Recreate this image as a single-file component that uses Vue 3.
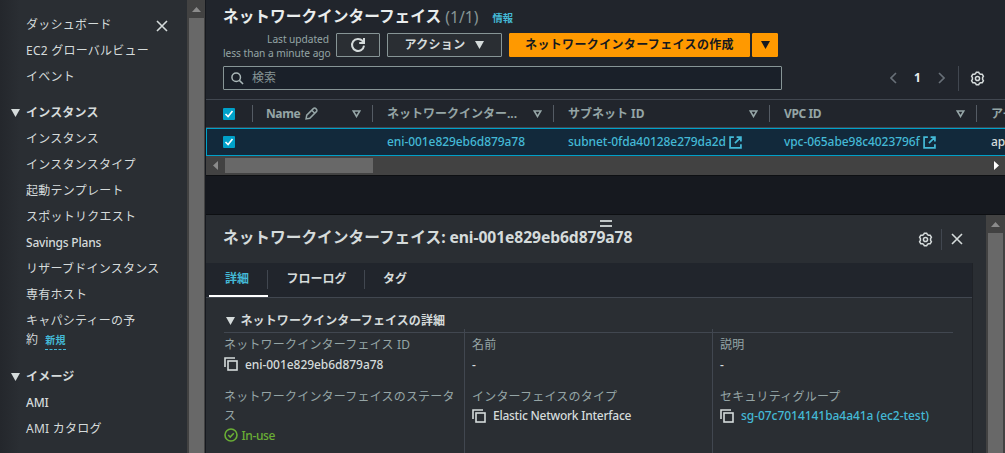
<template>
    <div class="console">
        <nav class="sidebar">
            <div class="nav-body">
                <svg class="nav-close" viewBox="0 0 12 12">
                    <path d="M1 1l10 10M11 1L1 11" />
                </svg>
                <section v-for="(group, i) in groups" :key="i" class="group">
                    <div v-if="group.title" class="group-title">
                        <svg class="caret" viewBox="0 0 9 8"><path d="M0 0h9L4.5 8z" /></svg>
                        <span>{{ group.title }}</span>
                    </div>
                    <div v-for="item in group.items" :key="item.text" class="item">
                        <span :class="{ latin: item.latin }">{{ item.text }}</span>
                        <template v-if="item.rest"
                            ><br />{{ item.rest }}<span class="new">新規</span></template
                        >
                    </div>
                </section>
            </div>
            <div class="vbar">
                <svg viewBox="0 0 9 5"><path d="M4.5 0L9 5H0z" /></svg>
                <div class="thumb"></div>
            </div>
        </nav>

        <main class="main">
            <header class="list-head">
                <div class="title-row">
                    <h1>ネットワークインターフェイス</h1>
                    <span class="count">(1/1)</span>
                    <a class="info">情報</a>
                </div>
                <div class="actions">
                    <p class="updated">
                        <span>Last updated</span><br /><span>less than a minute ago</span>
                    </p>
                    <button class="btn refresh">
                        <svg viewBox="0 0 16 16">
                            <path d="M14 8.6A6 6 0 1 1 12.6 4L14 5.6M14 1v5H9.2" />
                        </svg>
                    </button>
                    <button class="btn action">
                        <span>アクション</span>
                        <svg class="caret" viewBox="0 0 9 8"><path d="M0 0h9L4.5 8z" /></svg>
                    </button>
                    <button class="btn create">ネットワークインターフェイスの作成</button>
                    <button class="btn more">
                        <svg class="caret" viewBox="0 0 9 8"><path d="M0 0h9L4.5 8z" /></svg>
                    </button>
                </div>
                <div class="filter">
                    <div class="search">
                        <svg viewBox="0 0 14 14">
                            <circle cx="5.6" cy="5.6" r="4.6" />
                            <path d="M9 9l4 4" />
                        </svg>
                        <span>検索</span>
                    </div>
                    <div class="pager">
                        <svg class="chev" viewBox="0 0 7 12"><path d="M6 1L1 6l5 5" /></svg>
                        <b>1</b>
                        <svg class="chev" viewBox="0 0 7 12"><path d="M1 1l5 5-5 5" /></svg>
                        <i class="sep"></i>
                        <svg class="gear" viewBox="0 0 16 16">
                            <path :d="gearPath" />
                            <circle cx="8" cy="8" r="2.2" />
                        </svg>
                    </div>
                </div>
            </header>

            <div class="table">
                <div class="row head">
                    <div class="cell check">
                        <svg class="box" viewBox="0 0 12 12">
                            <rect width="12" height="12" rx="1" />
                            <path d="M2.5 6l2.6 2.6L9.5 3" />
                        </svg>
                    </div>
                    <div v-for="col in columns" :key="col.label" class="cell">
                        <span :class="{ latin: col.latin }">{{ col.label }}</span>
                        <svg v-if="col.edit" class="pencil" viewBox="0 0 12 12">
                            <path
                                d="M1 11l.6-3.4L7.7 1.5a1.6 1.6 0 0 1 2.3 0l.5.5a1.6 1.6 0 0 1 0 2.3L4.4 10.4zM6.2 3l2.8 2.8"
                            />
                        </svg>
                        <svg class="sort" viewBox="0 0 9 8"><path d="M1.2 1h6.6L4.5 6.5z" /></svg>
                    </div>
                    <div class="cell last"><span>アイ</span></div>
                </div>
                <div class="row selected">
                    <div class="cell check">
                        <svg class="box" viewBox="0 0 12 12">
                            <rect width="12" height="12" rx="1" />
                            <path d="M2.5 6l2.6 2.6L9.5 3" />
                        </svg>
                    </div>
                    <div class="cell"></div>
                    <div class="cell"><a>eni-001e829eb6d879a78</a></div>
                    <div v-for="link in links" :key="link" class="cell">
                        <a>{{ link }}</a>
                        <svg class="ext" viewBox="0 0 12 12">
                            <path d="M4.5 1H1v10h10V7.5M7 1h4v4M11 1L5.5 6.5" />
                        </svg>
                    </div>
                    <div class="cell last"><span>ap</span></div>
                </div>
            </div>
            <div class="hbar">
                <svg class="left" viewBox="0 0 5 9"><path d="M5 0v9L0 4.5z" /></svg>
                <div class="thumb"></div>
                <svg class="right" viewBox="0 0 5 9"><path d="M0 0v9l5-4.5z" /></svg>
            </div>
            <div class="gap"></div>

            <section class="split">
                <div class="panel">
                    <div class="grip"></div>
                    <header class="panel-head">
                        <h2>ネットワークインターフェイス<span>: eni-001e829eb6d879a78</span></h2>
                        <svg class="gear" viewBox="0 0 16 16">
                            <path :d="gearPath" />
                            <circle cx="8" cy="8" r="2.2" />
                        </svg>
                        <i class="sep"></i>
                        <svg class="close" viewBox="0 0 12 12">
                            <path d="M1 1l10 10M11 1L1 11" />
                        </svg>
                    </header>
                    <div class="content">
                        <div class="tabs">
                            <div
                                v-for="tab in tabs"
                                :key="tab"
                                class="tab"
                                :class="{ active: tab === activeTab }"
                                @click="activeTab = tab"
                            >
                                <span>{{ tab }}</span>
                            </div>
                        </div>
                        <div class="details">
                            <h3>
                                <svg class="caret" viewBox="0 0 9 8"><path d="M0 0h9L4.5 8z" /></svg>
                                <span>ネットワークインターフェイスの詳細</span>
                            </h3>
                            <div class="grid">
                                <div v-for="(col, i) in details" :key="i" class="col">
                                    <dl v-for="field in col" :key="field.label">
                                        <dt>{{ field.label }}</dt>
                                        <dd :class="field.cls">
                                            <svg v-if="field.copy" class="copy" viewBox="0 0 14 14">
                                                <path d="M1 10V1h10" />
                                                <rect x="4" y="4" width="9" height="9" />
                                            </svg>
                                            <svg v-if="field.ok" class="ok" viewBox="0 0 14 14">
                                                <circle cx="7" cy="7" r="6" />
                                                <path d="M4.2 7l2 2 3.6-3.8" />
                                            </svg>
                                            <span>{{ field.value }}</span>
                                        </dd>
                                    </dl>
                                </div>
                            </div>
                        </div>
                    </div>
                </div>
                <div class="vbar">
                    <svg viewBox="0 0 9 5"><path d="M4.5 0L9 5H0z" /></svg>
                    <div class="thumb"></div>
                </div>
            </section>
        </main>
    </div>
</template>

<script setup>
import { ref } from "vue";

const gearPath =
    "M5.9 2.9L6.8 1.3h2.4l.9 1.6 1.1.6 1.8 0 1.3 2-.9 1.6v1.8l.9 1.6-1.3 2h-1.8l-1.1.6-.9 1.6H6.8l-.9-1.6-1.1-.6H3l-1.3-2 .9-1.6V7.1l-.9-1.6 1.3-2h1.8z";

const groups = [
    {
        items: [
            { text: "ダッシュボード" },
            { text: "EC2 グローバルビュー" },
            { text: "イベント" },
        ],
    },
    {
        title: "インスタンス",
        items: [
            { text: "インスタンス" },
            { text: "インスタンスタイプ" },
            { text: "起動テンプレート" },
            { text: "スポットリクエスト" },
            { text: "Savings Plans", latin: true },
            { text: "リザーブドインスタンス" },
            { text: "専有ホスト" },
            { text: "キャパシティーの予", rest: "約" },
        ],
    },
    {
        title: "イメージ",
        items: [{ text: "AMI", latin: true }, { text: "AMI カタログ" }],
    },
];

const columns = [
    { label: "Name", edit: true, latin: true },
    { label: "ネットワークインター..." },
    { label: "サブネット ID" },
    { label: "VPC ID", latin: true },
];

const links = ["subnet-0fda40128e279da2d", "vpc-065abe98c4023796f"];

const tabs = ["詳細", "フローログ", "タグ"];
const activeTab = ref("詳細");

const details = [
    [
        { label: "ネットワークインターフェイス ID", value: "eni-001e829eb6d879a78", copy: true },
        { label: "ネットワークインターフェイスのステータス", value: "In-use", ok: true, cls: "status" },
    ],
    [
        { label: "名前", value: "-" },
        { label: "インターフェイスのタイプ", value: "Elastic Network Interface", copy: true, cls: "words" },
    ],
    [
        { label: "説明", value: "-" },
        { label: "セキュリティグループ", value: "sg-07c7014141ba4a41a (ec2-test)", copy: true, cls: "link" },
    ],
];
</script>

<style>
body {
    background: #16191f;
    overflow: hidden;
}
</style>

<style scoped>
* {
    box-sizing: border-box;
}

.console {
    display: flex;
    width: 1005px;
    height: 453px;
    overflow: hidden;
    background: #16191f;
    color: #d5dbdb;
    font: 12px/19.5px "Noto Sans", "Noto Sans CJK JP", sans-serif;
    white-space: nowrap;
}

svg {
    display: block;
    flex: none;
    fill: none;
    stroke: currentColor;
    stroke-width: 1.6;
}

h1,
h2,
h3,
p,
dl,
dd {
    margin: 0;
}

.caret {
    width: 9px;
    height: 8px;
    fill: currentColor;
    stroke: none;
}

.sep {
    width: 1px;
    background: #414750;
}

/* sidebar */
.sidebar {
    display: flex;
    flex: none;
    width: 206px;
    border-right: 1px solid #16191f;
}

.nav-body {
    position: relative;
    flex: none;
    width: 187px;
    padding: 15.2px 0 0 26px;
    background: linear-gradient(90deg, #24272c, #2a2e33 20px);
}

.nav-close {
    position: absolute;
    left: 156px;
    top: 20px;
    width: 12px;
    height: 12px;
}

.group {
    margin-bottom: 17px;
}

.group-title {
    display: flex;
    align-items: center;
    gap: 6.5px;
    margin: 0 0 6.4px -15.5px;
    font-weight: 700;
    letter-spacing: 0.2px;
}

.item {
    margin-bottom: 6.4px;
    letter-spacing: 0.25px;
}

.item .latin {
    font-weight: 500;
    letter-spacing: -0.2px;
}

.new {
    display: inline-block;
    margin-left: 7px;
    border-bottom: 1px dashed #44b9d6;
    color: #44b9d6;
    font-size: 10px;
    font-weight: 700;
    line-height: 17px;
}

.vbar {
    display: flex;
    flex: none;
    flex-direction: column;
    align-items: center;
    width: 19px;
    background: #424242;
}

.sidebar .vbar {
    width: 18px;
    padding-left: 1px;
}

.vbar svg {
    width: 9px;
    height: 5px;
    margin: 7px 0 6px;
    fill: #8b8b8b;
    stroke: none;
}

.vbar .thumb {
    flex: 1;
    width: 15px;
    background: #686868;
}

/* list */
.main {
    display: flex;
    flex: 1;
    flex-direction: column;
    min-width: 0;
}

.list-head {
    height: 99px;
    padding: 5px 20px 0 17px;
    background: #21252c;
}

.title-row {
    display: flex;
    align-items: center;
    height: 24px;
}

h1 {
    color: #eaeded;
    font-size: 15.7px;
    font-weight: 700;
}

.count {
    margin: 1px 0 0 4px;
    color: #879596;
    font-size: 15.7px;
}

.info {
    margin: 3px 0 0 14px;
    color: #44b9d6;
    font-size: 10.3px;
    font-weight: 700;
}

.actions {
    display: flex;
    height: 33px;
    padding-top: 4px;
}

.updated {
    width: 106px;
    margin: -1px 7px 0 0;
    color: #95a5a6;
    font-size: 10.2px;
    letter-spacing: -0.05px;
    line-height: 14px;
    text-align: right;
}

.btn {
    display: flex;
    align-items: center;
    justify-content: center;
    flex: none;
    height: 24px;
    padding: 0;
    border: 1px solid #879596;
    border-radius: 1px;
    background: #2a2e33;
    color: #d5dbdb;
    font: inherit;
    font-weight: 700;
}

.refresh {
    width: 44px;
    margin-right: 7px;
}

.refresh svg {
    width: 16px;
    height: 16px;
    stroke-width: 2;
}

.action {
    gap: 10px;
    width: 115px;
    margin-right: 7px;
    letter-spacing: 0.3px;
}

.create,
.more {
    border-color: #ff9900;
    background: #ff9900;
    color: #16191f;
}

.create {
    width: 241px;
    margin-right: 2px;
    letter-spacing: 0.35px;
}

.more {
    width: 26px;
}

.filter {
    display: flex;
    align-items: center;
    height: 24px;
    margin-top: 4px;
}

.search {
    display: flex;
    align-items: center;
    gap: 8px;
    width: 559px;
    height: 24px;
    padding-left: 7px;
    border: 1px solid #879596;
    border-radius: 1px;
    background: #1a2029;
    color: #879596;
}

.search svg {
    width: 13px;
    height: 13px;
    color: #aab7b8;
}

.pager {
    display: flex;
    align-items: center;
    margin-left: 108px;
}

.pager b {
    width: 41px;
    color: #eaeded;
    text-align: center;
}

.chev {
    width: 7px;
    height: 12px;
    color: #687078;
}

.pager .sep {
    height: 25px;
    margin: 0 11px 0 13px;
}

.gear {
    width: 15px;
    height: 15px;
}

.row {
    display: grid;
    grid-template-columns: 47px 120px 181px 216px 207px 1fr;
    align-items: center;
}

.head {
    height: 29px;
    border-top: 1px solid #414750;
    border-bottom: 1px solid #414750;
    background: #21252c;
    color: #95a5a6;
    font-weight: 700;
}

.head .latin {
    letter-spacing: -0.4px;
}

.selected {
    grid-template-columns: 46px 120px 181px 216px 207px 1fr;
    height: 28px;
    border: 1px solid #00a1c9;
    border-right: 0;
    background: #12293b;
    font-weight: 500;
    letter-spacing: -0.07px;
}

.cell {
    display: flex;
    align-items: center;
    min-width: 0;
    padding-left: 14px;
}

.selected .cell {
    color: #44b9d6;
}

.head .cell {
    height: 17px;
    border-right: 1px solid #545b64;
}

.head .check + .cell {
    padding-left: 13px;
}

.head .last {
    border: 0;
}

.selected .last {
    color: #d5dbdb;
}

.head .check {
    padding-left: 17px;
}

.selected .check {
    padding-left: 16px;
}

.box {
    width: 12px;
    height: 12px;
    color: #fff;
}

.box rect {
    fill: #00a1c9;
    stroke: none;
}

.pencil {
    width: 13px;
    height: 13px;
    margin-left: 5px;
    stroke-width: 1.4;
}

.sort {
    width: 9px;
    height: 8px;
    margin: 0 11px 0 auto;
}

.ext {
    width: 13px;
    height: 13px;
    margin-left: 3px;
}

.hbar {
    display: flex;
    align-items: center;
    height: 19px;
    padding: 0 6px 0 7px;
    background: #424242;
}

.hbar svg {
    width: 5px;
    height: 9px;
    fill: #8b8b8b;
    stroke: none;
}

.hbar .thumb {
    width: 148px;
    height: 15px;
    margin-left: 7px;
    background: #686868;
}

.hbar .right {
    margin-left: auto;
    fill: #fff;
}

.gap {
    height: 40px;
    border: solid #0d0f12;
    border-width: 1px 0;
    background: #16191f;
}

/* split panel */
.split {
    display: flex;
    flex: 1;
    min-height: 0;
    background: #2a2e33;
}

.panel {
    position: relative;
    flex: 1;
}

.grip {
    position: absolute;
    left: 394px;
    top: 5px;
    width: 12px;
    height: 7px;
    border: solid #c0c6c6;
    border-width: 2px 0;
}

.panel-head {
    display: flex;
    align-items: center;
    height: 48px;
    padding: 0 23px 0 17px;
}

h2 {
    flex: 1;
    margin-top: -3px;
    font-size: 15.7px;
    font-weight: 700;
}

h2 span {
    letter-spacing: -0.1px;
}

.panel-head .sep {
    height: 21px;
    margin: 0 9px 0 8px;
}

.close {
    width: 12px;
    height: 12px;
}

.content {
    width: 767px;
    height: 200px;
    border-right: 1px solid #1f2227;
}

.tabs {
    display: flex;
    height: 35px;
    padding-left: 3px;
    border-bottom: 1px solid #414750;
    background: #21252c;
    font-weight: 700;
}

.tab {
    position: relative;
    padding: 6px 18px 0 18.5px;
}

.tab:first-child {
    width: 59px;
    padding: 6px 0 0 16px;
}

.tab:not(:last-child)::after {
    content: "";
    position: absolute;
    right: 0;
    top: 7px;
    width: 1px;
    height: 19px;
    background: #414750;
}

.active {
    border-bottom: 2px solid #fff;
    color: #44b9d6;
}

.details {
    padding: 12px 19px 0 18px;
}

h3 {
    display: flex;
    align-items: center;
    gap: 6px;
    height: 22px;
    padding-left: 1.5px;
    font-size: 12px;
    letter-spacing: 0.1px;
}

.grid {
    display: grid;
    grid-template-columns: 241px 248px 1fr;
    border-top: 1px solid #414750;
}

.col {
    height: 130px;
    margin-top: -4px;
    padding-top: 6px;
}

.col + .col {
    padding-left: 7px;
}

.col:not(:last-child) {
    border-right: 1px solid #414750;
}

dl {
    margin-bottom: 12.5px;
}

dt {
    color: #95a5a6;
    letter-spacing: 0.2px;
    white-space: normal;
}

dd {
    display: flex;
    align-items: center;
    height: 19.5px;
    font-weight: 500;
    letter-spacing: -0.05px;
}

.copy {
    width: 14px;
    height: 14px;
    margin-right: 7px;
}

.ok {
    width: 14px;
    height: 14px;
    margin-right: 3.5px;
}

.status {
    color: #6aaf35;
    letter-spacing: -0.4px;
}

.words {
    letter-spacing: -0.25px;
}

.link span {
    color: #44b9d6;
}
</style>
